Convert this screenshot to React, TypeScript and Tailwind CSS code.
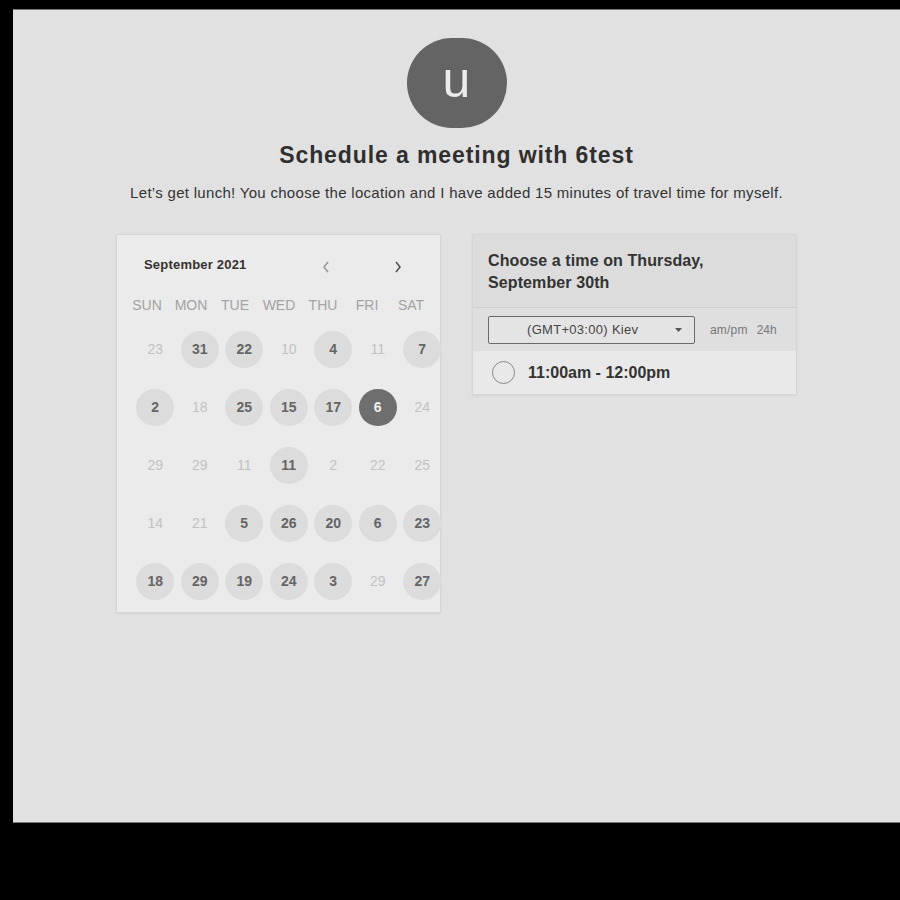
import React from "react";

type Cell = { n: number; c?: boolean; s?: boolean };

const rows: Cell[][] = [
  [{ n: 23 }, { n: 31, c: true }, { n: 22, c: true }, { n: 10 }, { n: 4, c: true }, { n: 11 }, { n: 7, c: true }],
  [{ n: 2, c: true }, { n: 18 }, { n: 25, c: true }, { n: 15, c: true }, { n: 17, c: true }, { n: 6, s: true }, { n: 24 }],
  [{ n: 29 }, { n: 29 }, { n: 11 }, { n: 11, c: true }, { n: 2 }, { n: 22 }, { n: 25 }],
  [{ n: 14 }, { n: 21 }, { n: 5, c: true }, { n: 26, c: true }, { n: 20, c: true }, { n: 6, c: true }, { n: 23, c: true }],
  [{ n: 18, c: true }, { n: 29, c: true }, { n: 19, c: true }, { n: 24, c: true }, { n: 3, c: true }, { n: 29 }, { n: 27, c: true }],
];

const days = ["SUN", "MON", "TUE", "WED", "THU", "FRI", "SAT"];

export default function App() {
  return (
    <div
      className="w-[900px] h-[900px] bg-black overflow-hidden"
      style={{ fontFamily: '"Liberation Sans", Arial, sans-serif' }}
    >
      <div className="ml-[13px] mt-[9px] w-[887px] h-[814px] bg-[#e1e1e1] border-t border-b border-[#7a7a7a] flex flex-col items-center">
        <div className="mt-[28px] w-[100px] h-[90px] rounded-full bg-[#646464] flex items-center justify-center">
          <span className="text-[50px] leading-none text-[#ececec] -mt-[7px]">u</span>
        </div>
        <h1 className="mt-[13px] text-[23px] leading-[28px] font-bold text-[#2f2f2f] tracking-[0.9px]">
          Schedule a meeting with 6test
        </h1>
        <p className="mt-[14px] text-[15px] leading-[20px] text-[#333] tracking-[0.3px]">
          Let’s get lunch! You choose the location and I have added 15 minutes of travel time for myself.
        </p>

        <div className="mt-[31px] flex gap-[31px] items-start">
          {/* Calendar */}
          <div className="w-[325px] h-[379px] bg-[#ebebeb] border border-[#d6d6d6] shadow-[0_1px_2px_rgba(0,0,0,0.06)]">
            <div className="pt-[20px] flex items-center h-[40px] pl-[27px]">
              <span className="text-[13px] font-bold text-[#333] w-[177px] tracking-[0.2px]">September 2021</span>
              <svg width="10" height="14" viewBox="0 0 10 14" className="mt-[4px]">
                <path d="M7 2 L3 7 L7 12" fill="none" stroke="#9a9a9a" strokeWidth="1.6" />
              </svg>
              <svg width="10" height="14" viewBox="0 0 10 14" className="ml-[62px] mt-[4px]">
                <path d="M3 2 L7 7 L3 12" fill="none" stroke="#555" strokeWidth="1.6" />
              </svg>
            </div>
            <div className="mt-[20px] ml-[8px] grid grid-cols-[repeat(7,44px)] h-[20px] items-center">
              {days.map((d) => (
                <div key={d} className="text-center text-[14px] text-[#a3a3a3]">
                  {d}
                </div>
              ))}
            </div>
            <div className="mt-[5px] ml-[16px] grid grid-cols-[repeat(7,44.5px)]">
              {rows.map((r, ri) =>
                r.map((cell, ci) => (
                  <div key={ri + "-" + ci} className="h-[58px] flex items-center justify-center">
                    {cell.s ? (
                      <div className="w-[38px] h-[37px] rounded-full bg-[#6e6e6e] flex items-center justify-center text-[14px] font-bold text-[#f0f0f0]">
                        {cell.n}
                      </div>
                    ) : cell.c ? (
                      <div className="w-[38px] h-[37px] rounded-full bg-[#dcdcdc] flex items-center justify-center text-[14px] font-bold text-[#656565]">
                        {cell.n}
                      </div>
                    ) : (
                      <div className="w-[38px] h-[37px] flex items-center justify-center text-[14px] text-[#c2c2c2]">
                        {cell.n}
                      </div>
                    )}
                  </div>
                ))
              )}
            </div>
          </div>

          {/* Time chooser */}
          <div className="w-[325px] border border-[#d6d6d6] shadow-[0_1px_2px_rgba(0,0,0,0.06)]">
            <div className="bg-[#dcdcdc] pt-[15px] pb-[13px] px-[15px] border-b border-[#cfcfcf]">
              <div className="text-[16px] leading-[22px] font-bold text-[#333] tracking-[0.1px]">
                Choose a time on Thursday,
                <br />
                September 30th
              </div>
            </div>
            <div className="bg-[#dfdfdf] h-[43px] flex items-center px-[15px]">
              <div className="w-[207px] h-[28px] border border-[#6a6a6a] rounded-[2px] bg-[#e4e4e4] flex items-center pl-[38px] pr-[12px]">
                <span className="text-[13px] text-[#444] flex-1 tracking-[0.3px]">(GMT+03:00) Kiev</span>
                <svg width="7" height="4" viewBox="0 0 7 4">
                  <path d="M0 0 L7 0 L3.5 4 Z" fill="#555" />
                </svg>
              </div>
              <span className="ml-[15px] text-[12px] text-[#777] tracking-[0.2px]">am/pm</span>
              <span className="ml-[9px] text-[12px] text-[#777]">24h</span>
            </div>
            <div className="bg-[#e9e9e9] h-[43px] flex items-center pl-[19px]">
              <div className="w-[23px] h-[23px] rounded-full border-[1.5px] border-[#8a8a8a]"></div>
              <span className="ml-[13px] text-[16px] font-bold text-[#333]">11:00am - 12:00pm</span>
            </div>
          </div>
        </div>
      </div>
    </div>
  );
}
